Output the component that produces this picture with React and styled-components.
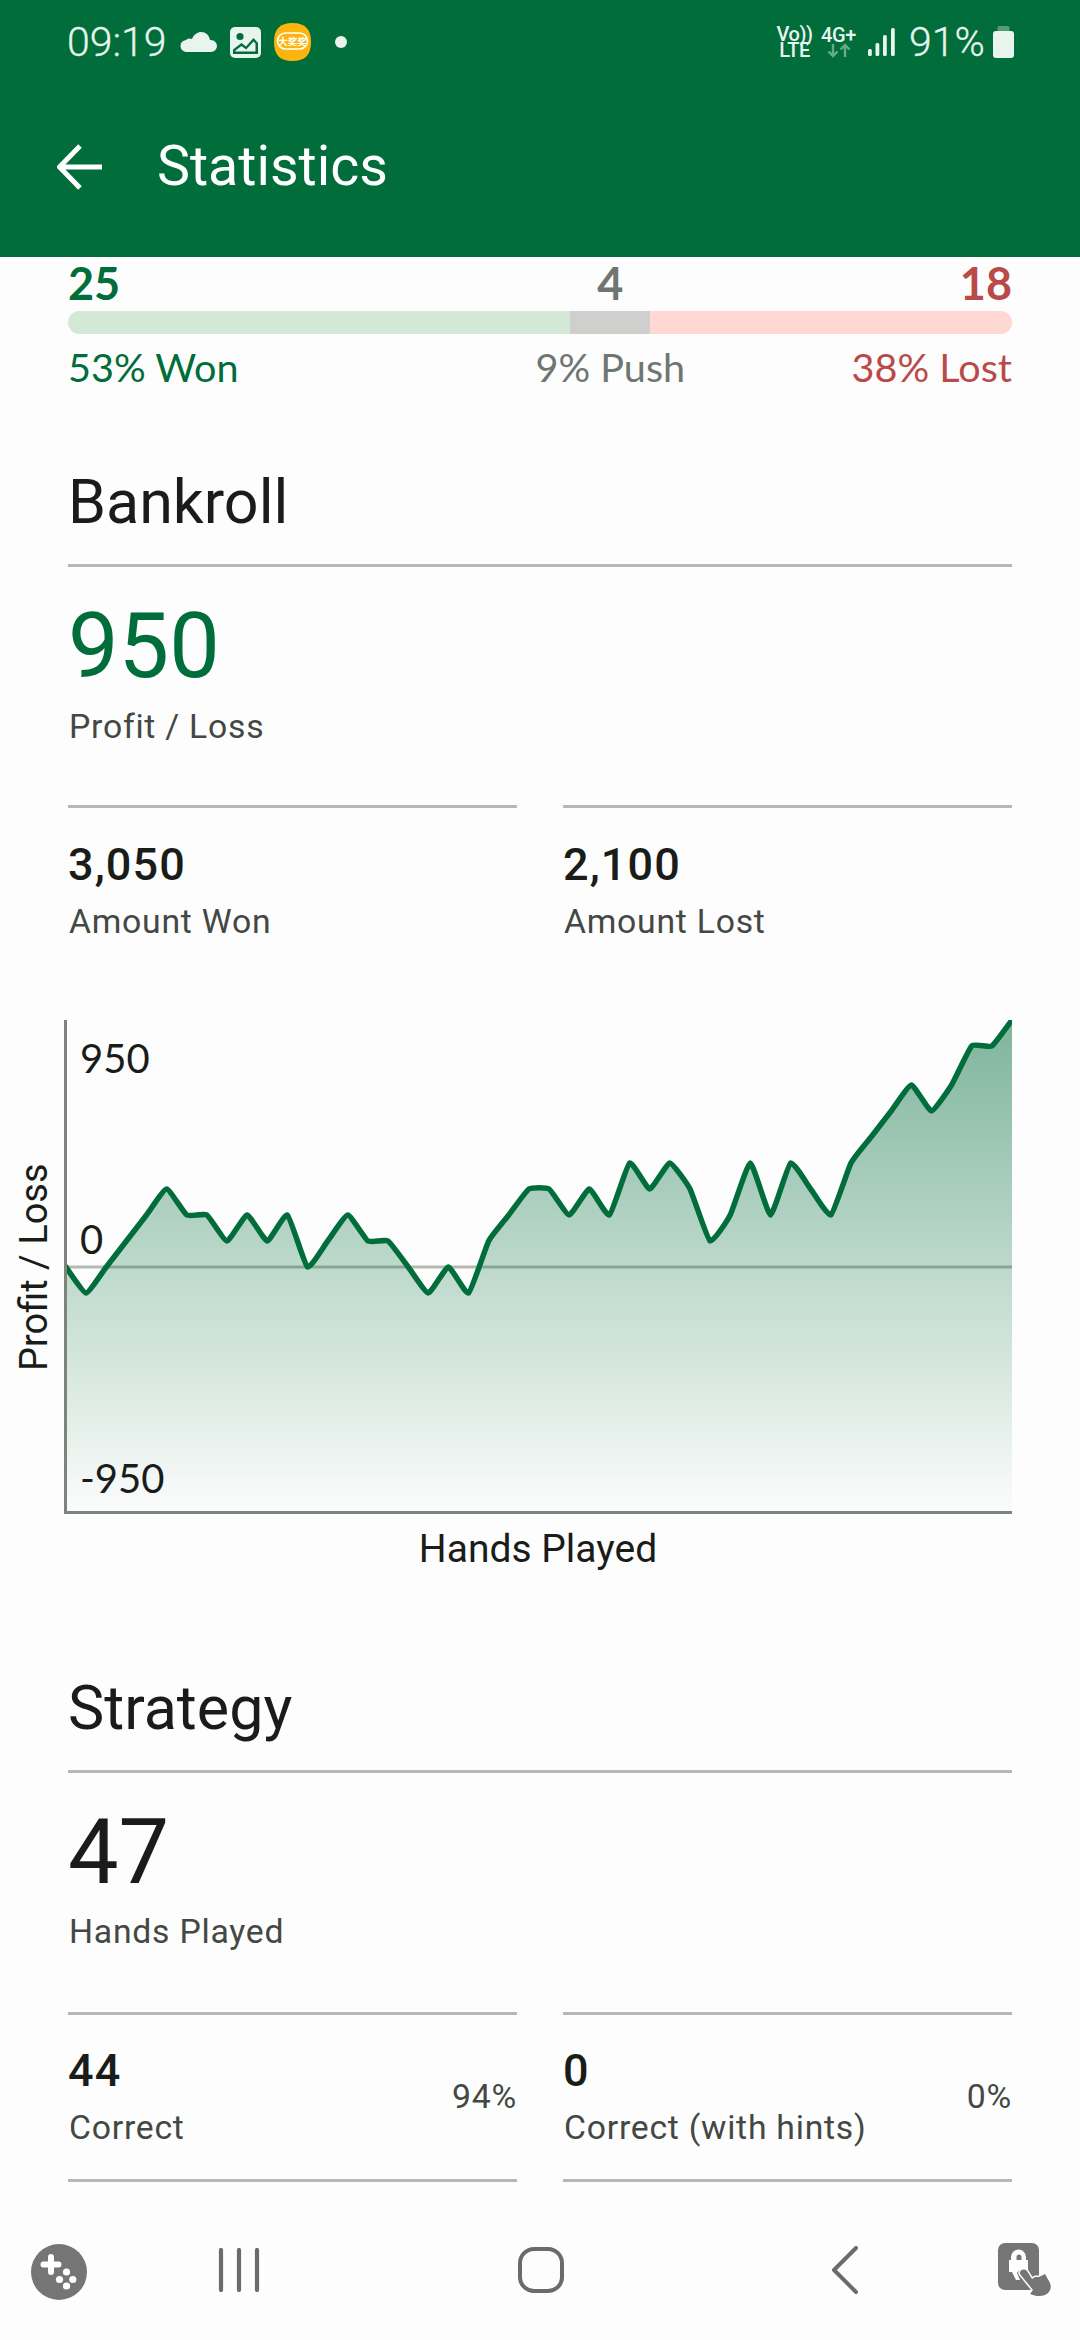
import React from 'react';
import styled, { createGlobalStyle } from 'styled-components';

const GREEN = '#006d3b';
const RULE = '#b5b9b2';

const Global = createGlobalStyle`
  html, body { margin: 0; padding: 0; background: #fdfdfd; }
  * { box-sizing: border-box; }
`;

const Screen = styled.div`
  width: 1080px; height: 2340px; display: flex; flex-direction: column; overflow: hidden;
  background: #fdfdfd; font-family: Roboto, sans-serif; color: #1a1c1a;
`;
const Header = styled.header`background: ${GREEN}; flex: none; height: 257px;`;
const StatusBar = styled.div`
  height: 84px; padding: 0 66px 0 67px; display: flex; align-items: center; justify-content: space-between;
  color: #e8f4ee;
`;
const StatusGroup = styled.div`display: flex; align-items: center;`;
const StatusText = styled.span`
  font-size: 41px; line-height: 44px; font-weight: 300; white-space: nowrap;
  width: ${p => p.$w}px; margin-left: ${p => p.$ml || 0}px; -webkit-text-stroke: 0.3px #e8f4ee;
`;
const StatusIcon = styled.svg`display: block; flex: none; margin-left: ${p => p.$ml || 0}px;`;
const TinyStack = styled.div`
  display: flex; flex-direction: column; align-items: center; flex: none; width: ${p => p.$w}px; margin-left: ${p => p.$ml || 0}px;
  font-size: 20px; line-height: 16px; font-weight: 500; white-space: nowrap; letter-spacing: -0.4px;
`;
const Toolbar = styled.div`
  height: 173px; padding: 0 0 8px 57px; display: flex; align-items: center; gap: 55px; color: #fff;
`;
const BackArrow = styled.svg`display: block; flex: none;`;
const Title = styled.h1`margin: 0; font-size: 55.500px; font-weight: 400; line-height: 60px;`;

const Content = styled.main`flex: 1; min-height: 0; overflow: hidden; padding: 1px 68px 0;`;

const Columns = styled.div`
  display: grid; grid-template-columns: minmax(0, 25fr) minmax(0, 4fr) minmax(0, 18fr);
`;
const CountCell = styled.div`
  display: flex; justify-content: ${p => p.$align}; white-space: nowrap; color: ${p => p.$color};
  font-family: Lato, sans-serif; font-size: 45px; font-weight: 700; line-height: 50px;
`;
const PctCell = styled(CountCell)`font-size: 39.600px; font-weight: 400; line-height: 48px;`;
const Bar = styled.div`display: flex; height: 23px; margin: 3px 0 9px; border-radius: 12px; overflow: hidden;`;
const BarPart = styled.div`flex: ${p => p.$n} 0 0; background: ${p => p.$color};`;

const SectionTitle = styled.h2`
  margin: ${p => p.$mt}px 0 0; padding: 0 0 24px; border-bottom: 3px solid ${RULE};
  font-size: 61px; line-height: 76px; font-weight: 400; color: #1a1c1a;
`;
const BigValue = styled.div`
  margin-top: 30px; font-size: 90px; line-height: 100px; font-weight: 400; color: ${p => p.$color};
`;
const Label = styled.div`margin-top: ${p => p.$mt || 7}px; font-size: 33.750px; line-height: 44px; color: #444844; letter-spacing: 0.75px; padding-left: 1px; white-space: nowrap;`;
const StatGrid = styled.div`display: grid; grid-template-columns: 1fr 1fr; gap: 46px; margin-top: ${p => p.$mt}px;`;
const StatCell = styled.div`
  border-top: 3px solid ${RULE}; padding-top: 29px; display: flex; align-items: center; justify-content: space-between;
  ${p => p.$closed && `border-bottom: 3px solid ${RULE}; padding-top: 28px; padding-bottom: 29px;`}
`;
const StatValue = styled.div`font-size: 45px; line-height: 56px; font-weight: 500; letter-spacing: 1.1px; color: #1a1c1a;`;
const Percent = styled.div`font-size: 33.750px; line-height: 44px; color: #444844; letter-spacing: 0.75px;`;

const ChartGrid = styled.div`
  display: grid; grid-template-columns: 64px 948px; margin: 76px 0 0 -68px;
`;
const YTitle = styled.div`
  display: flex; align-items: center; justify-content: center; padding-right: 4px;
  writing-mode: vertical-rl; transform: rotate(180deg); font-size: 38px; line-height: 40px; color: #1a1c1a; white-space: nowrap;
`;
const Plot = styled.div`
  position: relative; height: 494px; border-left: 3px solid #7d847c; border-bottom: 3px solid #7d847c;
`;
const PlotSvg = styled.svg`display: block; width: 945px; height: 491px;`;
const AxisValue = styled.span`
  position: absolute; left: 13px; top: ${p => p.$top}px; font-family: Lato, sans-serif; font-size: 40px; line-height: 44px; color: #1a1c1a;
`;
const XTitle = styled.div`
  grid-column: 2; margin-top: 13px; text-align: center; font-size: 39px; line-height: 44px; color: #1a1c1a;
`;

const Nav = styled.nav`
  flex: none; height: 158px; padding-top: 62px; display: grid; grid-template-columns: 118px 242px 362px 246px 112px;
  align-items: start; justify-items: center; background: #fdfdfd;
`;
const NavIcon = styled.svg`display: block; margin-top: ${p => p.$mt || 0}px; margin-left: ${p => p.$ml || 0}px;`;

const values = [0,-2,0,2,4,6,4,4,2,4,2,4,0,2,4,2,2,0,-2,0,-2,2,4,6,6,4,6,4,8,6,8,6,2,4,8,4,8,6,4,8,10,12,14,12,14,17,17,19];
const pts = values.map((v, i) => [-1 + i * (946 / 47), 247 - v * 13]);
const S = 0.14;
function curve() {
  let d = `M${pts[0][0]} ${pts[0][1]}`;
  let tx = 0, ty = 0;
  for (let i = 1; i < pts.length; i++) {
    const prev = pts[i - 1], cur = pts[i], next = pts[Math.min(i + 1, pts.length - 1)];
    const c1x = prev[0] + tx, c1y = prev[1] + ty;
    tx = ((next[0] - prev[0]) / 2) * S;
    ty = ((next[1] - prev[1]) / 2) * S;
    d += `C${c1x.toFixed(1)} ${c1y.toFixed(1)} ${(cur[0] - tx).toFixed(1)} ${(cur[1] - ty).toFixed(1)} ${cur[0].toFixed(1)} ${cur[1]}`;
  }
  return d;
}
const line = curve();
const area = `${line}L945 491L-1 491Z`;

function Cell({ value, label, pct, closed }) {
  return (
    <StatCell $closed={closed}>
      <div>
        <StatValue>{value}</StatValue>
        <Label>{label}</Label>
      </div>
      {pct && <Percent>{pct}</Percent>}
    </StatCell>
  );
}

export default function App() {
  return (
    <Screen>
      <Global />
      <Header>
        <StatusBar>
          <StatusGroup>
            <StatusText $w={113}>09:19</StatusText>
            <StatusIcon width="37" height="20" viewBox="0 0 37 20">
              <path d="M7 20a6 6 0 0 1-1-12 6 6 0 0 1 6-1C14 2 18 0 21 0c5 0 8 3 9 8h1a6 6 0 0 1 0 12Z" fill="#e8f4ee" />
            </StatusIcon>
            <StatusIcon $ml={13} width="31" height="31" viewBox="0 0 31 31">
              <rect width="31" height="31" rx="5" fill="#e8f4ee" />
              <circle cx="10" cy="9.5" r="3.6" fill={GREEN} />
              <path d="M3 27v-4.5l8.500-6.500 4.500 3.500 7.500-8.500 4.500 5v11Z" fill={GREEN} />
              <path d="M5.500 24.500v-1l6-4.500 4.700 3.600 7.300-8.200 2 2.200v7.900Z" fill="#e8f4ee" />
            </StatusIcon>
            <StatusIcon $ml={13} width="37" height="38" viewBox="0 0 37 38">
              <path d="M18.500 0C31 0 37 6 37 19s-6 19-18.500 19S0 32 0 19 6 0 18.500 0Z" fill="#fdb40f" />
              <rect x="3.500" y="10" width="30" height="16" rx="8" fill="#fdb40f" stroke="#fff" strokeWidth="1.600" />
              <text x="18.500" y="22" textAnchor="middle" fontSize="9.500" fontWeight="700" fill="#fff" fontFamily="'Noto Sans CJK SC', sans-serif">大奖奖</text>
            </StatusIcon>
            <StatusIcon $ml={24} width="12" height="12" viewBox="0 0 12 12">
              <circle cx="6" cy="6" r="6" fill="#e8f4ee" />
            </StatusIcon>
          </StatusGroup>
          <StatusGroup>
            <TinyStack $w={29}>
              <span>Vo))</span>
              <span>LTE</span>
            </TinyStack>
            <TinyStack $w={33} $ml={13}>
              <span>4G+</span>
              <svg width="24" height="15" viewBox="0 0 24 15">
                <path d="M6 1v12M1.500 8.500 6 13l4.500-4.500M18 14V2M13.500 6.500 18 2l4.500 4.500" stroke="#e8f4ee" strokeOpacity="0.45" strokeWidth="2.400" fill="none" />
              </svg>
            </TinyStack>
            <StatusIcon $ml={13} width="27" height="30" viewBox="0 0 27 30">
              <rect x="0" y="22" width="3.800" height="7" rx="1.500" fill="#e8f4ee" />
              <rect x="7.500" y="16" width="3.800" height="13" rx="1.500" fill="#e8f4ee" />
              <rect x="15" y="8" width="3.800" height="21" rx="1.500" fill="#e8f4ee" />
              <rect x="23" y="1" width="3.800" height="28" rx="1.500" fill="#e8f4ee" />
            </StatusIcon>
            <StatusText $w={73} $ml={14}>91%</StatusText>
            <StatusIcon $ml={11} width="21" height="32" viewBox="0 0 21 32">
              <path d="M6 0h9a1.500 1.500 0 0 1 1.500 1.500V5H4.500V1.500A1.500 1.500 0 0 1 6 0Z" fill="#e8f4ee" fillOpacity="0.35" />
              <rect y="5" width="21" height="27" rx="3" fill="#e8f4ee" />
            </StatusIcon>
          </StatusGroup>
        </StatusBar>
        <Toolbar>
          <BackArrow width="45" height="46" viewBox="0 0 45 46">
            <path d="M45 23H4M23 2 2.500 23 23 44" stroke="#fff" strokeWidth="5" fill="none" />
          </BackArrow>
          <Title>Statistics</Title>
        </Toolbar>
      </Header>

      <Content>
        <Columns>
          <CountCell $align="flex-start" $color={GREEN}>25</CountCell>
          <CountCell $align="center" $color="#6f7570">4</CountCell>
          <CountCell $align="flex-end" $color="#ba4a4a">18</CountCell>
        </Columns>
        <Bar>
          <BarPart $n={25} $color="#d3e8d5" />
          <BarPart $n={4} $color="#cfd0cd" />
          <BarPart $n={18} $color="#ffd8d4" />
        </Bar>
        <Columns>
          <PctCell $align="flex-start" $color={GREEN}>53% Won</PctCell>
          <PctCell $align="center" $color="#6f7570">9% Push</PctCell>
          <PctCell $align="flex-end" $color="#ba4a4a">38% Lost</PctCell>
        </Columns>

        <SectionTitle $mt={73}>Bankroll</SectionTitle>
        <BigValue $color={GREEN}>950</BigValue>
        <Label $mt={8}>Profit / Loss</Label>
        <StatGrid $mt={56}>
          <Cell value="3,050" label="Amount Won" />
          <Cell value="2,100" label="Amount Lost" />
        </StatGrid>

        <ChartGrid>
          <YTitle>Profit / Loss</YTitle>
          <Plot>
            <PlotSvg viewBox="0 0 945 491">
              <defs>
                <linearGradient id="fade" x1="0" y1="0" x2="0" y2="1">
                  <stop offset="0" stopColor={GREEN} stopOpacity="0.5" />
                  <stop offset="1" stopColor={GREEN} stopOpacity="0.01" />
                </linearGradient>
              </defs>
              <line x1="0" x2="945" y1="247" y2="247" stroke={RULE} strokeWidth="3" />
              <path d={area} fill="url(#fade)" />
              <path d={line} fill="none" stroke={GREEN} strokeWidth="5.500" strokeLinejoin="round" strokeLinecap="round" />
            </PlotSvg>
            <AxisValue $top={16}>950</AxisValue>
            <AxisValue $top={197}>0</AxisValue>
            <AxisValue $top={436}>-950</AxisValue>
          </Plot>
          <XTitle>Hands Played</XTitle>
        </ChartGrid>

        <SectionTitle $mt={99}>Strategy</SectionTitle>
        <BigValue $color="#1a1c1a">47</BigValue>
        <Label>Hands Played</Label>
        <StatGrid $mt={58}>
          <Cell value="44" label="Correct" pct="94%" closed />
          <Cell value="0" label="Correct (with hints)" pct="0%" closed />
        </StatGrid>
      </Content>

      <Nav>
        <NavIcon width="56" height="56" viewBox="0 0 56 56">
          <circle cx="28" cy="28" r="28" fill="#757575" />
          <path d="M20 13v15M12.500 20.500h15" stroke="#fff" strokeWidth="6" strokeLinecap="round" />
          <circle cx="35.500" cy="28" r="3.600" fill="#fff" />
          <circle cx="28.500" cy="35.500" r="3.600" fill="#fff" />
          <circle cx="41.800" cy="35.500" r="3.600" fill="#fff" />
          <circle cx="35.500" cy="42" r="3.600" fill="#fff" />
        </NavIcon>
        <NavIcon $mt={4} width="42" height="44" viewBox="0 0 42 44">
          <path d="M3 2v40M21 2v40M39 2v40" stroke="#6b6b6b" strokeWidth="4.200" strokeLinecap="round" />
        </NavIcon>
        <NavIcon $mt={3} width="46" height="46" viewBox="0 0 46 46">
          <rect x="2" y="2" width="42" height="42" rx="14" fill="none" stroke="#6b6b6b" strokeWidth="4" />
        </NavIcon>
        <NavIcon $mt={2} width="26" height="48" viewBox="0 0 26 48">
          <path d="M24 2 2 24l22 22" fill="none" stroke="#6b6b6b" strokeWidth="4" strokeLinecap="round" strokeLinejoin="round" />
        </NavIcon>
        <NavIcon $ml={4} $mt={-1} width="56" height="56" viewBox="0 0 56 56">
          <rect width="41" height="47" rx="7" fill="#757575" />
          <path d="M13 17v-3a7.500 7.500 0 0 1 15 0v3h2v12h-4l-2-2h-3l-2 3 3 7h-4l-4-8h-3V17Zm5.500 0h5v-3a2.500 2.500 0 0 0-5 0Z" fill="#fff" fillRule="evenodd" />
          <path d="M22 31c-1-4 4-6 7-3l5 8 3-2 4 0 4-2 2-1 5 9c2 5 0 10-5 12-5 2-10 1-15-1l3-4Z" fill="#757575" stroke="#fff" strokeWidth="3" paintOrder="stroke" />
        </NavIcon>
      </Nav>
    </Screen>
  );
}
